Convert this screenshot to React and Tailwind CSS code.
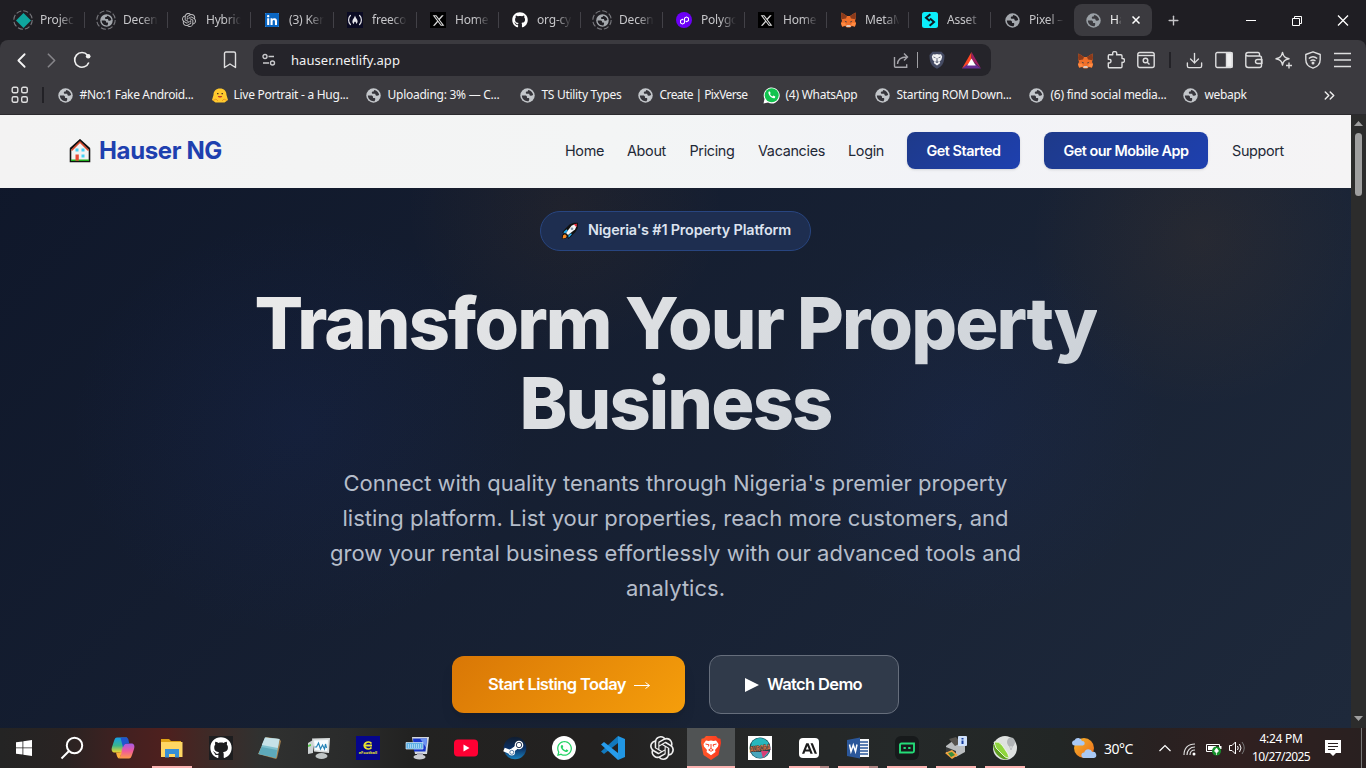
import React, { useLayoutEffect, useRef } from "react";
import { FaLinkedin, FaXTwitter, FaGithub, FaWhatsapp, FaSteam } from "react-icons/fa6";
import { SiOpenai, SiPolygon, SiAnthropic } from "react-icons/si";
import { ChevronLeft, ChevronRight, Download, ChevronsRight, Plus } from "lucide-react";

/* Single-line label that spreads its letters to fill a given width. */
function Fit({ w, className = "", children }) {
  const ref = useRef(null);
  useLayoutEffect(() => {
    const el = ref.current;
    const run = () => {
      el.style.letterSpacing = "0px";
      const natural = el.getBoundingClientRect().width;
      el.style.letterSpacing = (w - natural) / el.textContent.length + "px";
    };
    run();
    if (document.fonts) document.fonts.ready.then(run);
  }, [w]);
  return <span ref={ref} className={"inline-block whitespace-nowrap " + className}>{children}</span>;
}

const Globe = ({ s = 15, c = "#a4a8ad", d = "#36353b" }) => (
  <svg width={s} height={s} viewBox="0 0 16 16">
    <circle cx="8" cy="8" r="7.7" fill={c} />
    <path d="M2 8h3.400c1.300 0 2.100.7 2.100 1.700v.9h1.300c.9 0 1.300.7 1.100 1.500L9.200 14C5.500 14.600 2 12 2 8z" fill={d} />
    <path d="M8.600 2c2.900.3 5.200 2.600 5.400 5.400l-2 .9c-1 .3-1.700-.2-1.900-1L9.800 6.200H7.500c-.9 0-1.400-.5-1.300-1.300 0-.8.600-1.200 1.400-1.200h.6z" fill={d} />
  </svg>
);
const Ring = ({ children }) => (
  <span className="relative flex h-5 w-5 items-center justify-center">
    <svg className="absolute inset-0" width="20" height="20" viewBox="0 0 20 20" fill="none" stroke="#77777c" strokeWidth="1.1">
      <circle cx="10" cy="10" r="9.2" strokeDasharray="5.2 2.02" />
    </svg>
    {children}
  </span>
);
const Diamond = () => (
  <svg width="15" height="15" viewBox="0 0 15 15"><path d="M7.5 0 15 7.5 7.5 15 0 7.5z" fill="#0fa69e" /></svg>
);
const XBox = () => <span className="flex h-4 w-4 items-center justify-center bg-black text-[#d9d9d9]"><FaXTwitter size={13} /></span>;
const Fox = () => (
  <svg width="17" height="16" viewBox="0 0 17 16">
    <path d="M1.500.5 7 4h3l5.500-3.500.5 5-1 3.500 1 2-1.200 3.800-3-.8-1.600 1.500H6.800L5.200 14l-3 .8L1 11l1-2-1-3.500z" fill="#f0702a" />
    <path d="M1.500.5 7 4l-1 2.500-4.500.800L1 5zM15.500.5 10 4l1 2.500 4.500.8.5-2.300z" fill="#8a3b1c" />
    <path d="M6.600 13h3.800l.4 2H6.200z" fill="#d8c9c0" />
    <path d="M4.500 8.800l2.200.7-.4 1.200zM12.500 8.800l-2.200.7.4 1.200z" fill="#2a3a48" />
    <path d="M1 10.800h4l1 2.500-4 1.200zM16 10.800h-4l-1 2.500 4 1.200z" fill="#ff8a42" />
  </svg>
);
const FreeCode = () => (
  <svg width="16" height="16" viewBox="0 0 16 16">
    <path d="M0 0h16v16H0z" fill="#0a0a23" />
    <g fill="none" stroke="#e4e4ea" strokeWidth="1.2" strokeLinecap="round">
      <path d="M3.400 3.500C1 5.600 1 10.400 3.400 12.500M12.600 3.500c2.400 2.100 2.400 6.900 0 9" />
    </g>
    <path d="M8 3.6c.3 2.4 2.6 3.5 2.6 5.6 0 1.5-.8 2.3-1.6 2.8.3-1-.1-1.800-1-2.400-.8.6-1.200 1.400-.9 2.400C6 11.500 5.400 10.700 5.400 9.400 5.400 7.200 7.700 6 8 3.600z" fill="#e4e4ea" />
  </svg>
);
const Bybit = () => (
  <svg width="16" height="16" viewBox="0 0 16 16">
    <rect width="16" height="16" rx="2.500" fill="#0ceefb" />
    <path d="M8.400 2.200 4 5.800l3.800 3.200M8 6.500l4 3.400-4.400 3.900" fill="none" stroke="#101820" strokeWidth="2" />
  </svg>
);

const tabs = [
  [<Ring><Diamond /></Ring>, "Projec"],
  [<Ring><Globe s={13} d="#1f1e23" /></Ring>, "Decen"],
  [<SiOpenai size={14} color="#c2c2c4" />, "Hybrid"],
  [<span className="flex h-3.5 w-3.5 items-center justify-center bg-white"><FaLinkedin size={16} color="#0a66c2" className="shrink-0" /></span>, "(3) Ker"],
  [<FreeCode />, "freeco"],
  [<XBox />, "Home"],
  [<FaGithub size={16} color="#fff" />, "org-cy"],
  [<Ring><Globe s={13} d="#1f1e23" /></Ring>, "Decen"],
  [<span className="flex h-4 w-4 items-center justify-center rounded-full bg-[#6c00f6]"><SiPolygon size={9} color="#fff" /></span>, "Polygo"],
  [<XBox />, "Home"],
  [<Fox />, "MetaM"],
  [<Bybit />, "Asset"],
  [<Globe d="#1f1e23" />, "Pixel –"],
];

const marks = [
  [57, "#No:1 Fake Android...", 114, 0],
  [211, "Live Portrait - a Hug...", 115, 1],
  [365, "Uploading: 3% — C...", 112, 0],
  [519, "TS Utility Types", 80, 0],
  [637, "Create | PixVerse", 88, 0],
  [763, "(4) WhatsApp", 72, 2],
  [874, "Starting ROM Down...", 115, 0],
  [1028, "(6) find social media...", 116, 0],
  [1182, "webapk", 42, 0],
];

const Hug = () => (
  <svg width="16" height="15" viewBox="0 0 16 15">
    <path d="M8 .5c4 0 6.500 2.500 6.500 6.400L16 12l-3.500 2.600h-9L0 12l1.500-5.100C1.500 3 4 .5 8 .5z" fill="#ffc92e" />
    <path d="M5 5.600h1.500M9.500 5.600H11" stroke="#4a3520" strokeWidth="1.300" />
    <path d="M5.800 8h4.400c-.3 2-4.100 2-4.400 0z" fill="#c0392b" />
    <path d="M1 12.500l3-1.500 2 2M15 12.500 12 11l-2 2" stroke="#ee9b1f" strokeWidth="1" fill="none" />
  </svg>
);
const WaMark = () => (
  <svg width="17" height="17" viewBox="0 0 17 17">
    <path d="M.5 16.500 1.500 12A8 8 0 1 1 5 15.600z" fill="#fff" />
    <circle cx="8.700" cy="8.300" r="7" fill="#12c34f" />
    <path d="M5.700 4.600c-1.500 2.400 3.200 7.800 6.200 6.500l.4-1.500-1.900-1-.9 1c-1.200-.5-2-1.400-2.500-2.500l.7-.8-.8-1.900z" fill="#fff" />
  </svg>
);

function TabStrip() {
  return (
    <div className="flex h-10 items-center bg-[#1f1e23] pl-[2px]">
      {tabs.map(([icon, t], i) => (
        <div key={i} className={"flex h-full shrink-0 items-center " + (i < 5 ? "w-[83px]" : "w-[82px]")}>
          <span className="ml-[9px] flex w-6 shrink-0 justify-center">{icon}</span>
          <span className="ml-[5px] w-[35px] whitespace-nowrap text-[12px] tracking-[-0.2px] text-[#c6c6c9] [mask-image:linear-gradient(90deg,#000_55%,transparent_100%)]">{t}</span>
          {i < 12 && <span className="ml-auto h-4 w-px bg-[#424147]" />}
        </div>
      ))}
      <div className="ml-[1px] flex h-8 w-[78px] shrink-0 items-center rounded-lg bg-[#3b3a3f]">
        <span className="ml-3 flex w-[15px]"><Globe s={15} d="#3b3a3f" c="#9aa0a6" /></span>
        <span className="ml-[9px] w-[12px] text-[12px] text-[#eee] [mask-image:linear-gradient(90deg,#000_60%,transparent_95%)]">Ha</span>
        <svg className="ml-[10px]" width="8" height="8" viewBox="0 0 8 8" stroke="#fff" strokeWidth="1.500"><path d="M.5.5l7 7m0-7-7 7" /></svg>
      </div>
      <Plus className="ml-[14px]" size={15} color="#c5c5c8" strokeWidth={2.200} />
      <svg className="ml-auto mr-[16px] mt-px" width="106" height="14" viewBox="0 0 106 14" fill="none" stroke="#fff" strokeWidth="1">
        <path d="M2 6.500h10M48.500 4.500h7v7h-7zM50.500 4.500v-2h7v7h-2" /><path d="M94 1.500l10 10m0-10-10 10" strokeWidth="1.300" />
      </svg>
    </div>
  );
}

const I = ({ w = 18, h = 18, ml, children }) => (
  <svg width={w} height={h} viewBox={`0 0 ${w} ${h}`} fill="none" stroke="#dededf" strokeWidth="1.400" strokeLinejoin="round" className={"shrink-0 " + ml}>{children}</svg>
);

function Toolbar() {
  return (
    <div className="flex h-10 items-center">
      <ChevronLeft className="ml-[9px]" size={25} strokeWidth={1.700} color="#f5f5f5" />
      <ChevronRight className="ml-[5px]" size={25} strokeWidth={1.600} color="#858489" />
      <I ml="ml-[9px]"><path d="M15.800 11.500A7.300 7.300 0 1 1 14.600 4.200" stroke="#f0f0f0" strokeWidth="1.600" /><circle cx="15.200" cy="5.300" r="2.300" fill="#f0f0f0" stroke="none" /></I>
      <I w={14} h={18} ml="ml-[132px]"><path d="M1.500 2.500q0-1.500 1.500-1.500h8q1.500 0 1.500 1.500v14L7 13l-5.500 3.500z" /></I>
      <div className="ml-[16px] flex h-8 w-[738px] items-center rounded-[9px] bg-[#25242a]">
        <svg className="ml-[9px]" width="14" height="14" viewBox="0 0 14 14" fill="none" stroke="#c9c9cc" strokeWidth="1.400"><circle cx="3" cy="3.500" r="2" /><circle cx="10.500" cy="10" r="2" /><path d="M6.500 3.500H12M1 10h6" /></svg>
        <Fit w={109} className="ml-[15px] mt-[2px] text-[13px] text-[#f2f2f3]">hauser.netlify.app</Fit>
        <svg className="ml-auto" width="17" height="18" viewBox="0 0 17 18" fill="none" stroke="#a7a6ac" strokeWidth="1.400"><path d="M1.500 6v9.200c0 .7.300 1 1 1h11.200v-3M4.500 13c.4-4.500 3-7 9-7M11 2.500 14.500 6 11 9.500" /></svg>
        <span className="ml-[7px] h-4 w-px bg-[#a0a0a4]" />
        <svg className="ml-[11px]" width="16" height="18" viewBox="0 0 16 18"><path d="M3.500.8h9L15.500 4c0 6-1 11-7.500 13.700C1.500 15 .5 10 .5 4z" fill="#454b63" /><path d="M4 3.300l2 .3 2-.5 2 .5 2-.3 1.200 2.400-1 3.200-1.700 1.600.8 1.500L8 14.500 4.700 12l.8-1.500-1.700-1.600-1-3.200z" fill="#f2f2f4" /><path d="M4.500 6l2 .8M11.500 6l-2 .8M8 7v3l-1.300.8L8 11.800l1.300-1L8 10" stroke="#454b63" strokeWidth=".8" fill="none" /></svg>
        <svg className="ml-[17px] mr-[10px]" width="19" height="17" viewBox="0 0 19 17"><path d="M9.500 0 0 16.500l9.500-5z" fill="#ff4724" /><path d="M9.500 0 19 16.500 9.500 8z" fill="#9e1f63" /><path d="M0 16.500h19L13.500 12h-8z" fill="#662d91" /><path d="M9.500 6.500l4.300 7H5.200z" fill="#fff" /></svg>
      </div>
      <span className="ml-[86px] mt-[2px]"><Fox /></span>
      <I ml="ml-[13px]"><path d="M2.200 3.800h3.600c-.6-2.600.6-3.300 1.900-3.300s2.500.7 1.900 3.300h4.200q1.200 0 1.200 1.200v2.500c1.800-.3 2.500.700 2.500 1.900s-.7 2.200-2.500 1.900v4.200q0 1.200-1.200 1.200H2.500q-1.200 0-1.200-1.200V12c2 .3 2.700-.8 2.700-1.900s-.7-2.200-2.700-1.900V5q0-1.200.9-1.200z" /></I>
      <I ml="ml-[12px]"><rect x=".8" y="1.500" width="16.400" height="15" rx="2" /><path d="M1 4.500h16" /><circle cx="8.500" cy="9.500" r="2.300" /><path d="M10.200 11.200l2.300 2.300" /></I>
      <span className="ml-[14px] h-4 w-[2px] bg-[#232227]" />
      <Download className="ml-[14px]" size={19} strokeWidth={1.700} color="#dededf" />
      <I ml="ml-[11px]"><rect x=".8" y="1.500" width="16.400" height="15" rx="1.500" /><path d="M11.500 2h5.500v14h-5.500z" fill="#f0f0f0" /></I>
      <I ml="ml-[12px]"><path d="M14.500 5V3q0-1.500-1.500-1.500H3Q.8 1.500.8 4v10q0 2.500 2.500 2.500h11.200q2 0 2-2V7q0-2-2-2H3Q.8 5 .8 3.500M17 8.500h-4.500q-2 0-2 2t2 2H17z" /></I>
      <I ml="ml-[12px]"><path d="M7.500 1.500c.8 4 2.300 5.300 6.500 6.300-4.200 1-5.700 2.200-6.500 6.200C6.700 10 5.200 8.800 1 7.800c4.200-1 5.700-2.300 6.500-6.300zM14 11.500v6M11 14.500h6" /></I>
      <I w={16} ml="ml-[12px]"><path d="M8 .8l7.200 2.700v5C15.200 13 12 16 8 17.200 4 16 .8 13 .8 8.500v-5zM3.800 7.500q4.200-3.500 8.400 0M5.500 10q2.500-2 5 0" /><circle cx="8" cy="12" r=".8" fill="#ddd" /></I>
      <I w={17} ml="ml-[13px]"><path d="M0 2.500h17M0 9h17M0 15.500h17" strokeWidth="1.700" /></I>
    </div>
  );
}

function Bookmarks() {
  return (
    <div className="flex h-[34px] items-start">
      <I ml="ml-[11px] mt-[6px]"><rect x="1.200" y="1.200" width="5.600" height="5.600" rx="1.500" /><rect x="10.700" y="1.200" width="5.600" height="5.600" rx="1.500" /><rect x="1.200" y="10.700" width="5.600" height="5.600" rx="1.500" /><rect x="10.700" y="10.700" width="5.600" height="5.600" rx="1.500" /></I>
      <span className="ml-[13px] mt-[7px] h-4 w-[2px] bg-[#222126]" />
      <div className="ml-[12.500px] flex h-[30px] items-center">
        {marks.map(([x, t, w, k], i) => (
          <div key={i} className="flex shrink-0 items-center" style={{ width: (i < 8 ? marks[i + 1][0] : 1260) - x }}>
            <span className="flex w-[18px] justify-center">{k === 0 ? <Globe c="#c3c6ca" /> : k === 1 ? <Hug /> : <WaMark />}</span>
            <Fit w={w} className="ml-[5px] text-[12px] leading-4 text-[#f4f4f5]">{t}</Fit>
          </div>
        ))}
      </div>
      <ChevronsRight className="ml-[61px] mt-[7px]" size={17} color="#eee" strokeWidth={2} />
    </div>
  );
}

const House = () => (
  <svg width="22" height="24" viewBox="0 0 22 24">
    <path d="M11 1.500 1.500 10.500v12h19v-12z" fill="#f2f2f2" stroke="#111" strokeWidth="1.600" />
    <path d="M2.500 11.500 11 3l8.500 8.500" fill="none" stroke="#dc4a2c" strokeWidth="1.500" />
    <path d="M1 9.800 11 .8l10 9" fill="none" stroke="#111" strokeWidth="1.300" />
    <path d="M2 20.500h18V22H2z" fill="#20b020" />
    <path d="M6.500 9.500h3v3h-3zM12.500 9.500h3v3h-3zM12.500 15.500h3v3h-3z" fill="#45d3f7" />
    <path d="M6.500 15.500h3.300v6.200H6.500z" fill="#e84a35" />
  </svg>
);
const Rocket = () => (
  <svg width="18" height="18" viewBox="0 0 18 18">
    <path d="M1 10.500 4.500 6.500 8.500 2.500 13 .8 17 .8 16.800 6 14.500 10 11 13.500l-3.500 3.500-1.500-2-2 2H.8l.5-4L3 11z" fill="#111" />
    <path d="M5 11 10.500 3.800l3-1.500 2 2L14 7.500 7 13z" fill="#f4f6f8" />
    <path d="M12.700 2.300 16 1.700l-.6 3.500z" fill="#e82c3f" />
    <path d="M2.300 10.300 5.700 7.200l1 1.500-2.500 2.800zM7.300 13.500l2.600-2.300 1 1-3.200 3.500z" fill="#20aaf0" />
    <path d="M1.600 16.400l.6-3.200 1.800-1 1.800 1.900-1.200 1.800z" fill="#ff8b20" />
    <circle cx="11" cy="6.800" r="1.300" fill="#8395a7" />
  </svg>
);

function Page() {
  const link = "text-[14.400px] leading-5 text-[#1f2937]";
  const cta = "flex h-[37px] items-center justify-center rounded-lg bg-[linear-gradient(135deg,#1e3a8a,#1e40af)] text-white shadow";
  return (
    <div className="flex h-[613px] w-[1351px] shrink-0 flex-col overflow-hidden bg-[linear-gradient(135deg,#0f172a_0%,#1e293b_100%)] font-[Inter,sans-serif]">
      <header className="flex h-[73px] shrink-0 items-center bg-[linear-gradient(90deg,#f3f3f3,#f3f5f5_45%,#f2f3f7_70%,#f5f4f5)] pb-[2px] pl-[69px]">
        <House />
        <Fit w={123} className="ml-[8px] text-[24px] leading-8 font-bold text-[#1e40af]">Hauser NG</Fit>
        <nav className="ml-[343px] flex items-center">
          <Fit w={39} className={link}>Home</Fit>
          <Fit w={39} className={link + " ml-[23px]"}>About</Fit>
          <Fit w={45} className={link + " ml-[23.500px]"}>Pricing</Fit>
          <Fit w={67} className={link + " ml-[23.500px]"}>Vacancies</Fit>
          <Fit w={36} className={link + " ml-[23px]"}>Login</Fit>
          <span className={cta + " ml-[23px] w-[113px]"}><Fit w={74} className="text-[14.400px] font-semibold">Get Started</Fit></span>
          <span className={cta + " ml-[24px] w-[164px]"}><Fit w={125} className="text-[14.400px] font-semibold">Get our Mobile App</Fit></span>
          <Fit w={52} className={link + " ml-[24px]"}>Support</Fit>
        </nav>
      </header>
      <main className="flex grow flex-col items-center bg-[radial-gradient(ellipse_230px_210px_at_300px_240px,rgba(30,64,175,0.09),transparent),radial-gradient(ellipse_200px_190px_at_965px_240px,rgba(30,64,175,0.09),transparent),radial-gradient(ellipse_160px_150px_at_565px_20px,rgba(217,119,6,0.06),transparent),radial-gradient(ellipse_170px_170px_at_1200px_50px,rgba(217,119,6,0.07),transparent)] pt-[23px]">
        <div className="flex h-10 w-[271px] items-center rounded-full border border-[#284580] bg-[#1e2e50] pl-[20px]">
          <Rocket />
          <Fit w={203} className="mb-[2px] ml-[9px] text-[14.400px] font-semibold text-[#dde3ef]">Nigeria's #1 Property Platform</Fit>
        </div>
        <h1 className="mt-[32px] flex flex-col items-center bg-[linear-gradient(135deg,#eaeaea,#cad0d7)] bg-clip-text text-[72px] leading-[80px] font-extrabold text-transparent">
          <Fit w={842}>Transform Your Property</Fit>
          <Fit w={312}>Business</Fit>
        </h1>
        <p className="mt-[23px] flex flex-col items-center text-[22px] leading-[35px] text-[#b5bdca]">
          <Fit w={664}>Connect with quality tenants through Nigeria's premier property</Fit>
          <Fit w={666}>listing platform. List your properties, reach more customers, and</Fit>
          <Fit w={691}>grow your rental business effortlessly with our advanced tools and</Fit>
          <Fit w={99}>analytics.</Fit>
        </p>
        <div className="mt-[49px] flex items-center gap-6">
          <div className="flex h-[57px] w-[233px] items-center rounded-xl bg-[linear-gradient(135deg,#d97706,#f59e0b)] pl-[36px] text-white shadow-lg">
            <Fit w={138} className="text-[16.500px] font-semibold">Start Listing Today</Fit>
            <svg className="ml-[8px] mt-[2px]" width="17" height="9" viewBox="0 0 17 9" fill="none" stroke="#fff" strokeWidth="1"><path d="M0 4.500h15.500M11.500 1.500l4 3-4 3" /></svg>
          </div>
          <div className="flex h-[59px] w-[190px] items-center rounded-xl border border-[#666e7c] bg-[#303a4a] pl-[35px] text-white">
            <svg width="14" height="14" viewBox="0 0 14 14"><path d="M0 0l14 7-14 7z" fill="#fff" /></svg>
            <Fit w={95} className="ml-[8px] text-[16.500px] font-semibold">Watch Demo</Fit>
          </div>
        </div>
      </main>
    </div>
  );
}

const Svg = ({ s = 24, children }) => <svg width={s} height={s} viewBox="0 0 24 24">{children}</svg>;
const apps = [
  <svg width="16" height="16" viewBox="0 0 16 16" className="-translate-x-px"><path d="M0 2.300 6.500 1.400v6.100H0zM7.300 1.300 16 0v7.500H7.300zM0 8.300h6.500v6.300L0 13.700zM7.300 8.300H16V16l-8.700-1.300z" fill="#fff" /></svg>,
  <svg width="24" height="24" viewBox="0 0 24 24" fill="none" stroke="#fff" strokeWidth="2" className="-translate-x-[2px]"><circle cx="14.500" cy="9.500" r="7.700" /><path d="M9 15 1.500 22.500" /></svg>,
  <Svg><defs><linearGradient id="cpA" x1="0" y1="0" x2="0" y2="1"><stop stopColor="#169ee8" /><stop offset=".55" stopColor="#3bb58b" /><stop offset="1" stopColor="#f3d72d" /></linearGradient><linearGradient id="cpB" x1="0" y1="0" x2="0" y2="1"><stop stopColor="#a45be8" /><stop offset=".5" stopColor="#f05a9b" /><stop offset="1" stopColor="#ff9c48" /></linearGradient></defs><path d="M6 1.500h10l-3 9c-1.500 5-2 6-5 6H4c-3 0-4-2-3-5.500l2-6c.8-2.500 1.500-3.500 3-3.500z" fill="url(#cpA)" /><path d="M18 22.500H8.500l2.500-9c1.500-5 2-6 5-6h4c3 0 4 2 3 5.500l-2 6c-.8 2.500-1.500 3.500-3 3.500z" fill="url(#cpB)" /><path d="M9.500 1.500H15c2 0 2.500 1.500 3.200 6H16c-2 0-3 1-4 4z" fill="#2156cf" /><path d="M8.500 22.500c-2 0-2.500-2-3.500-6h3c2 0 3-.8 3.800-3z" fill="#ffb13b" /></Svg>,
  <Svg><path d="M1 3h8l2 2h10v5H1z" fill="#e0a215" /><path d="M1 6h21.500v15H1z" fill="#ffd663" /><path d="M5 13h14v8.500h-4V18H9v3.500H5z" fill="#378fd6" /></Svg>,
  <span className="flex h-6 w-6 items-center justify-center bg-[#1d1d1f]"><FaGithub size={22} color="#fff" /></span>,
  <Svg><path d="M8 1 21 3l2 2-4 17-1 1L0 18z" fill="#a58150" /><path d="M7 1.500 21.500 3 18 22 .5 18z" fill="#7fc1cf" /><path d="M7 1.500 21.500 3l-1.700 9L3.800 9z" fill="#c7e2e8" /><path d="M3.500 11l15.500 3-1 8L.5 18z" fill="#4f9eb0" opacity=".7" /></Svg>,
  <Svg><path d="M1 7l5-3v13l-5 1z" fill="#cdd2d4" /><path d="M5 2.500 23 2l-1 15-15-1.500z" fill="#d9dddd" /><path d="M7 4.500 21 4l-.8 11-12-1z" fill="#f7fcff" /><path d="M7.500 11h2l2-4 2 6 2-4 2 4 1-5 1 4" fill="none" stroke="#2684b8" strokeWidth="1.200" /><ellipse cx="14.500" cy="20" rx="6" ry="3" fill="#bfc5c5" /><path d="M1 9l3-1v2l-3 1z" fill="#57ca48" /></Svg>,
  <span className="flex h-6 w-6 flex-col items-center justify-center bg-[#05058c] text-[#e9e32e]"><svg width="10" height="9" viewBox="0 0 10 9" fill="none" stroke="#e9e32e" strokeWidth="1.800"><path d="M8.500 2.500A4 3.400 0 1 0 8.500 6.500M1 4.500h8" /></svg><span className="text-[4px] leading-[6px] font-bold">eFootball</span></span>,
  <Svg><path d="M7 1h17l-2 17H10z" fill="#d4d9df" /><path d="M8 2.500h14l-1.500 13H9z" fill="#1735c8" /><path d="M15 2.500h7l-1 9z" fill="#6b92f2" /><path d="M1 6.500h17v6.500H1z" fill="#5fb1e5" stroke="#ddeefa" strokeWidth=".7" /><path d="M3 9h13M3 11h13" stroke="#eaf6ff" strokeDasharray="1 1" /><path d="M12 17h6v3h-6z" fill="#aab" /><ellipse cx="14.500" cy="21" rx="6" ry="2.500" fill="#c9ccd1" /></Svg>,
  <svg width="24" height="18" viewBox="0 0 24 18"><rect y=".5" width="24" height="17" rx="4" fill="#ff0033" /><path d="M9.500 5.500v7l6-3.500z" fill="#fff" /></svg>,
  <Svg><defs><linearGradient id="stm" x1="0" y1="0" x2="0" y2="1"><stop stopColor="#111d2e" /><stop offset=".5" stopColor="#0b2f62" /><stop offset="1" stopColor="#1a80bd" /></linearGradient></defs><circle cx="12" cy="12" r="11.300" fill="url(#stm)" /><path d="M1 13.500 7 16l5.500-4L15 9" fill="none" stroke="#fff" strokeWidth="4" /><circle cx="16" cy="9" r="4.300" fill="#fff" /><circle cx="16" cy="9" r="2.700" fill="#fff" stroke="#17294a" strokeWidth=".9" /><circle cx="8.800" cy="16.300" r="3.200" fill="#fff" /><circle cx="8.800" cy="16.300" r="2" fill="none" stroke="#1c4d86" strokeWidth=".7" /></Svg>,
  <span className="flex h-6 w-6 items-center justify-center rounded-full bg-white"><FaWhatsapp size={17} color="#25d366" /></span>,
  <Svg><path d="M17 0 24 3v18l-7 3z" fill="#2196e3" /><path d="M17 0v7L3 18l-3-2.500z" fill="#1279be" /><path d="M17 24v-7L3 6 0 8.500z" fill="#279cec" /></Svg>,
  <SiOpenai size={24} color="#f0f0f0" />,
  <Svg><defs><linearGradient id="brv"><stop stopColor="#ff5b2a" /><stop offset="1" stopColor="#fb381f" /></linearGradient></defs><path d="M7 0h10l2 2.300 2.500.5L22 7l-2.500 12L12 24l-7.500-5L2 7l.5-4.200L5 2.300z" fill="url(#brv)" /><path d="M7 4.500l2.500.5L12 4.500l2.500.5L17 4.500l2.500 3.500-.5 2.500-3 3.500.5 2L12 19.300 7.500 16l.5-2-3-3.500L4.500 8z" fill="#fff" /><path d="M6.500 8 10 8.800 9.300 10.500M17.500 8 14 8.800l.7 1.700M12 8v4.500l-2.300 1.400L12 15.300l2.300-1.400-2.300-1.400" fill="none" stroke="#fb4325" strokeWidth="1" /></Svg>,
  <Svg><path d="M0 0h24v24H0z" fill="#fff" /><circle cx="12" cy="12" r="10.500" fill="#164852" /><path d="M4 6q8-8 16 0l1 4H3z" fill="#27b7bd" /><path d="M3 16h18q-3 6-9 6t-9-6z" fill="#49a6bd" /><path d="M13 15h8l-6 7z" fill="#d93e77" /><text x="12" y="15" textAnchor="middle" textLength="21" lengthAdjust="spacingAndGlyphs" fontSize="8" fontWeight="900" fontFamily="Inter, sans-serif" fill="#ee7a46" stroke="#16292e" strokeWidth=".3" transform="rotate(-7 12 12)">AURORA</text></Svg>,
  <span className="flex h-5 w-5 items-center justify-center rounded-[4px] bg-white"><SiAnthropic size={15} color="#1c1c1c" /></span>,
  <Svg><path d="M12 3h11v18H12z" fill="#f6f8fb" /><path d="M14 6h8M14 9h8M14 12h8M14 15h8M14 18h8" stroke="#2b579a" strokeWidth="1.300" /><path d="M1 4l13-2.500v21L1 20z" fill="#2b579a" /><path d="M3.500 8.500 5 15.500 7.300 9l2.200 6.500L11 8.500" fill="none" stroke="#fff" strokeWidth="1.500" /></Svg>,
  <span className="flex h-6 w-6 items-center justify-center rounded-md bg-[#171a1b]"><svg width="16" height="13" viewBox="0 0 16 13" fill="none" stroke="#24dc78" strokeWidth="1.900"><path d="M1 9V3q0-1.500 1.500-1.500H15V9q0 1.500-1.500 1.500H1z" /><path d="M4.500 6h2.300M9.200 6h2.300" /></svg></span>,
  <Svg><path d="M2 10l8-6 11 4v8l-9 5-10-4z" fill="#babdbf" /><path d="M5 3l7-2 5 6-6 3z" fill="#56534e" /><path d="M2 11l10 4v4L2 16z" fill="#393c3d" /><path d="M1 17l7-3 6 5-6 4z" fill="#f3a33c" /><path d="M4 17l4-1 3 3-4 2z" fill="#398d3c" /><rect x="14" y="0" width="9" height="10" rx="1" fill="#cfe1fb" /><path d="M18.500 2v1.500M18.500 4.500V8" stroke="#153d9c" strokeWidth="2" /></Svg>,
  <Svg><circle cx="12" cy="12" r="12" fill="#dfe2e0" /><ellipse cx="18" cy="6" rx="4" ry="4.500" fill="#b1b5b7" /><path d="M16 9l2 5 2-5" stroke="#b1b5b7" strokeWidth=".8" fill="none" /><path d="M0 9c4-2 8-1 11 3l5 9q-1 2.500-4 2.500C6 22 1 17 0 9z" fill="#5f9f20" /><path d="M1 6q5-1 8 3l6 9q1 3 0 4-2 0-4-2L3 12z" fill="#8fd53d" stroke="#fff" strokeWidth=".8" /></Svg>,
];
const bars = { 3: [40, 0], 14: [48, 0], 16: [31, 9], 17: [31, 9], 18: [40, 0], 19: [40, 0], 20: [40, 0] };

function Taskbar() {
  return (
    <footer className="flex h-10 shrink-0 items-stretch bg-[linear-gradient(90deg,#242424_0px,#292322_65px,#442020_130px,#4e201e_165px,#3e2a27_210px,#303130_260px,#2a2b2b_350px,#222221_410px,#232120_600px,#252626_690px,#252929_900px,#222625_1060px,#292121_1160px,#302020_1240px,#292020_1366px)] pl-px">
      {apps.map((a, i) => (
        <div key={i} className={"mr-px flex w-12 shrink-0 flex-col items-center " + (i === 14 ? "bg-[#505354]" : "")}>
          <span className="flex h-[38px] items-center pt-[2px]">{a}</span>
          {bars[i] && <span className="flex h-[2px]" style={{ width: bars[i][0] + bars[i][1] }}><i className="grow bg-[#fbb3b1]" />{bars[i][1] > 0 && <i className="w-[9px] bg-[#ae8483]" />}</span>}
        </div>
      ))}
      <div className="ml-[41px] flex items-center text-white">
        <svg width="26" height="24" viewBox="0 0 26 24"><defs><linearGradient id="sun" x2="1" y2="1"><stop stopColor="#f5b52c" /><stop offset="1" stopColor="#ed6b1a" /></linearGradient></defs><circle cx="13" cy="12" r="10" fill="url(#sun)" /><path d="M3 9.500a2.700 2.700 0 0 1 .5-5.300 4 4 0 0 1 7.500 1 2.200 2.200 0 0 1 1 4.300zM13 22a2.700 2.700 0 0 1 .3-5.500 4.200 4.200 0 0 1 8-.5 3 3 0 0 1 1.700 6z" fill="#a9c9f5" /></svg>
        <Fit w={29} className="ml-[7px] text-[14px]">30°C</Fit>
        <svg className="ml-[26px]" width="12" height="8" viewBox="0 0 12 8" fill="none" stroke="#fff" strokeWidth="1.200"><path d="M.5 7 6 1.500 11.500 7" /></svg>
        <svg className="ml-[12px] mt-[2px]" width="13" height="13" viewBox="0 0 13 13" fill="none" stroke="#ddd" strokeWidth="1.200"><path d="M1 12C1 5 5 1 12 1M4 12c0-4.500 3-8 8-8M7 12c0-3 2-5 5-5" /><circle cx="11" cy="11" r="1.500" fill="#fff" stroke="none" /></svg>
        <svg className="ml-[10px] mt-[2px]" width="16" height="14" viewBox="0 0 16 14"><path d="M.5 2.500h13v7H.5z" fill="none" stroke="#fff" /><path d="M2 4h8v4H2zM14 4h1.500v3H14z" fill="#fff" /><circle cx="10.500" cy="9" r="4.500" fill="#16912b" /><path d="M10.500 6 8.500 9l2 2 2-2zM10.500 9v4" fill="#fff" stroke="#fff" strokeWidth=".7" /></svg>
        <svg className="ml-[7px]" width="17" height="14" viewBox="0 0 17 14" fill="none" stroke="#fff" strokeWidth="1"><path d="M.5 4.500H3L6.500 1v12L3 9.500H.5zM8.500 5q1.500 2 0 4M10.500 3q3 4 0 8" /><path d="M13 1q4.500 6 0 12" stroke="#777" /></svg>
        <div className="ml-[6px] flex w-[58px] flex-col items-center text-[12px] leading-[18px]">
          <Fit w={43}>4:24 PM</Fit><Fit w={58}>10/27/2025</Fit>
        </div>
        <svg className="ml-[15px]" width="16" height="16" viewBox="0 0 16 16"><path d="M0 0h16v13h-5l-3 3-3-3H0z" fill="#fff" /><path d="M3 3.500h10M3 6.500h10M3 9.500h7" stroke="#292020" /></svg>
        <span className="ml-[20px] h-10 w-px bg-[#777]" />
      </div>
    </footer>
  );
}

export default function App() {
  return (
    <div className="flex h-[768px] w-[1366px] flex-col overflow-hidden bg-[#1f1e23] font-['Noto_Sans',sans-serif]">
      <TabStrip />
      <div className="h-[75px] shrink-0 rounded-t-lg border-b border-[#2b2a2e] bg-[#3b3a3f]">
        <Toolbar />
        <Bookmarks />
      </div>
      <div className="flex h-[613px] shrink-0">
        <Page />
        <div className="flex w-[15px] flex-col items-center bg-[#2c2c2c] pt-[6px]">
          <svg width="9" height="5" viewBox="0 0 9 5"><path d="M4.500 0 9 5H0z" fill="#9f9f9f" /></svg>
          <span className="mt-[7px] h-[63px] w-[7px] rounded-full bg-[#9f9f9f]" />
          <svg className="mb-[7px] mt-auto" width="9" height="5" viewBox="0 0 9 5"><path d="M4.500 5 9 0H0z" fill="#9f9f9f" /></svg>
        </div>
      </div>
      <Taskbar />
    </div>
  );
}
